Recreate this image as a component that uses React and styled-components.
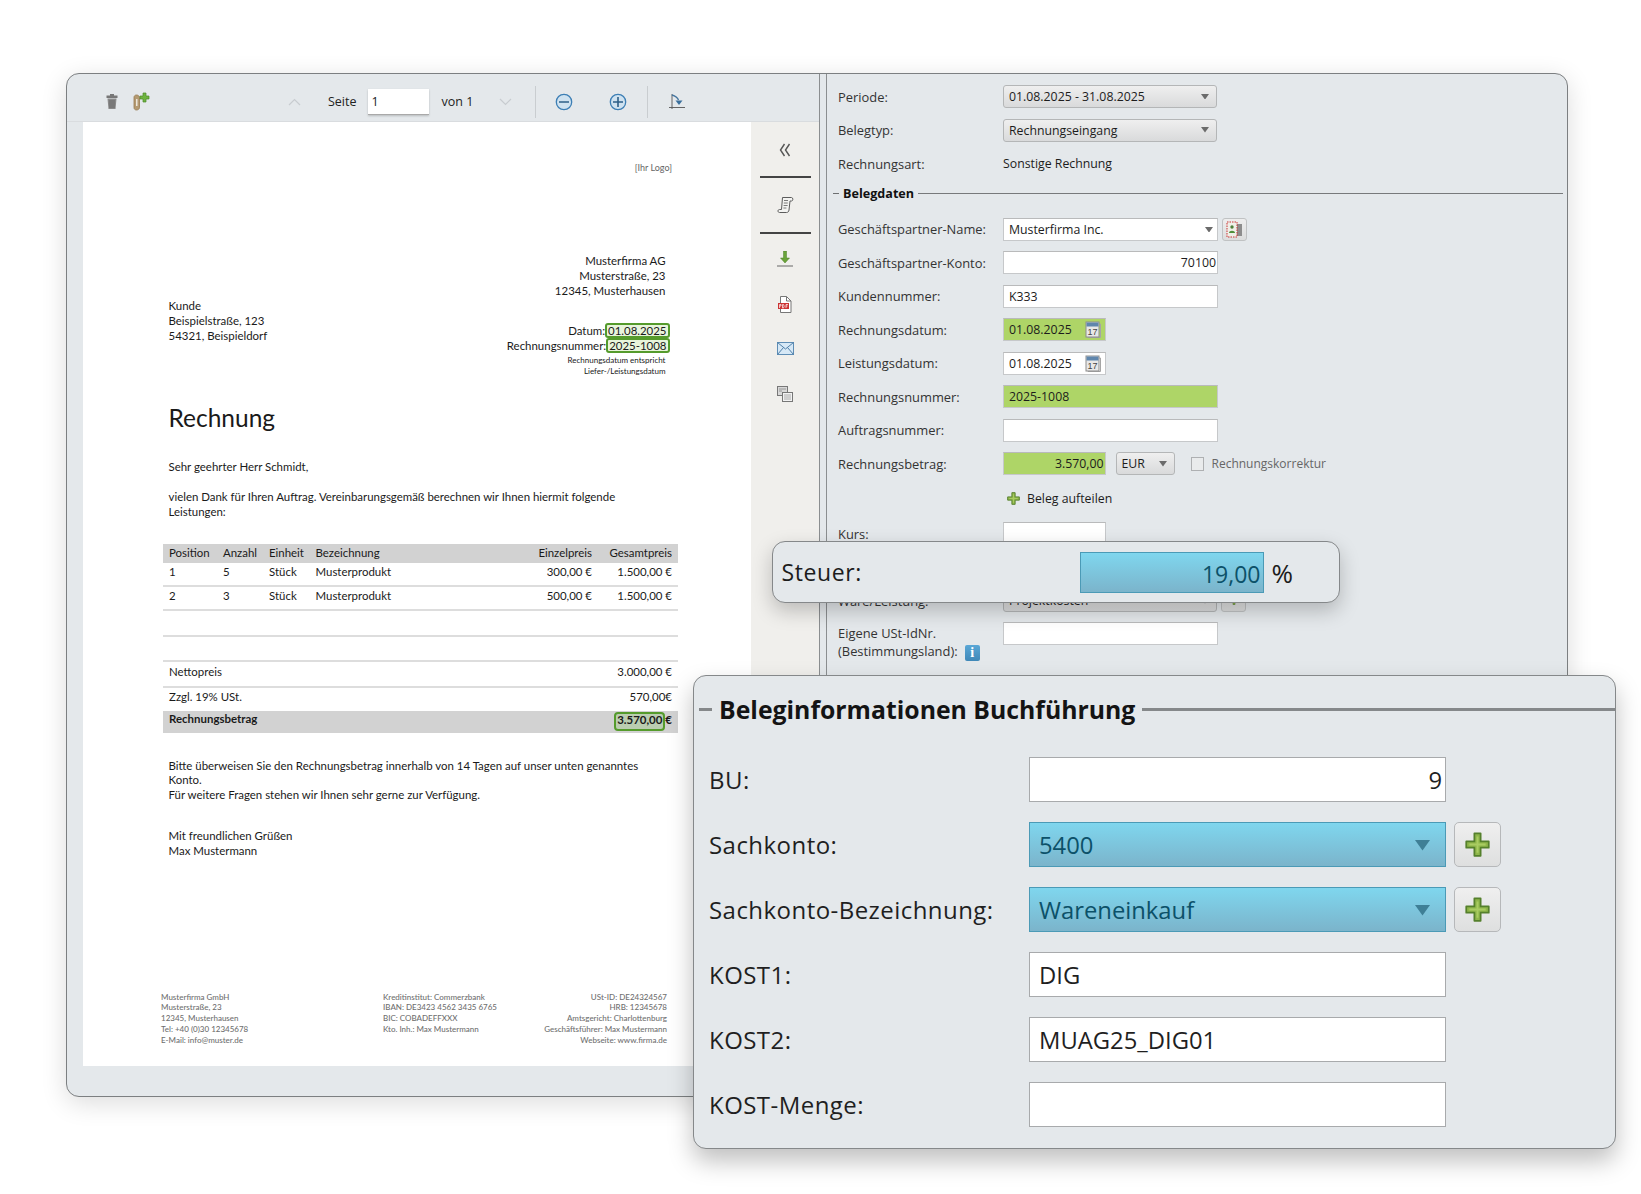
import React from "react";
import styled, { createGlobalStyle } from "styled-components";

const FORM_FONT = `"Open Sans", "Liberation Sans", sans-serif`;
const DOC_FONT = `Lato, "Open Sans", sans-serif`;

const GlobalStyle = createGlobalStyle`
  html, body {
    margin: 0;
    padding: 0;
    background: #fff;
  }
  * {
    box-sizing: border-box;
  }
`;

const Stage = styled.div`
  position: relative;
  width: 1641px;
  height: 1194px;
  padding: 73px 0 0 66px;
  overflow: hidden;
  font-family: ${FORM_FONT};
`;

const Window = styled.div`
  display: flex;
  width: 1502px;
  height: 1024px;
  background: #e4e8eb;
  border: 1px solid #7c7f81;
  border-radius: 13px;
  box-shadow: 0 6px 26px rgba(0, 0, 0, 0.14);
  overflow: hidden;
`;

const ViewerPane = styled.div`
  display: flex;
  flex-direction: column;
  width: 753px;
  flex: none;
  border-right: 1px solid #8b8e90;
`;

const Toolbar = styled.div`
  display: flex;
  align-items: center;
  height: 48px;
  flex: none;
  padding: 8px 0 0 36px;
  border-bottom: 1px solid #d9dcdf;
  color: #222;
  font-size: 12.5px;
`;

const ToolIcon = styled.span`
  display: inline-flex;
  width: ${(p) => p.$w || 18}px;
  justify-content: center;
  margin-left: ${(p) => p.$ml || 0}px;
`;

const ToolLabel = styled.span`
  margin-left: ${(p) => p.$ml || 0}px;
`;

const PageInput = styled.div`
  width: 61px;
  height: 26px;
  margin-left: 11px;
  padding-left: 4px;
  line-height: 26px;
  background: #fff;
  border-bottom: 1px solid #a9a9a9;
  box-shadow: 0 1px 2px rgba(0, 0, 0, 0.2);
`;

const ToolSeparator = styled.span`
  width: 1px;
  height: 32px;
  background: #c9cdd0;
  margin-left: ${(p) => p.$ml || 0}px;
`;

const ViewerBody = styled.div`
  display: flex;
  flex: 1;
  padding: 0 0 30px 16px;
`;

const Page = styled.div`
  width: 668px;
  background: #fff;
  color: #1a1a1a;
  font-family: ${DOC_FONT};
  font-size: 11.45px;
  line-height: 14.8px;
  padding: 39px 7px 0 85.5px;
`;

const LogoNote = styled.div`
  text-align: right;
  font-size: 9px;
  line-height: 14px;
  color: #666;
  padding-right: 72px;
`;

const HeadGrid = styled.div`
  display: grid;
  grid-template-columns: 1fr auto;
  margin-top: 79px;
  padding-right: 78.5px;
`;

const Recipient = styled.div`
  margin-top: 45px;
`;

const Sender = styled.div`
  text-align: right;
`;

const DateBlock = styled.div`
  margin-top: 26px;
`;

const Marked = styled.span`
  display: inline-block;
  margin: -2px -4px -2px 0;
  padding: 0 1px;
  line-height: 11px;
  background: rgba(150, 205, 90, 0.22);
  border: 2px solid #559b2c;
  border-radius: 3px;
`;

const SmallNote = styled.div`
  font-size: 8px;
  line-height: 10.6px;
  margin-top: 1px;
`;

const DocTitle = styled.div`
  font-size: 24.5px;
  line-height: 30px;
  margin-top: 27px;
`;

const DocPara = styled.p`
  margin: ${(p) => p.$mt || 0}px 0 0;
  max-width: 490px;
`;

const ItemTable = styled.div`
  margin: 24.5px 0 0 -5.5px;
  width: 515px;
`;

const ItemRow = styled.div`
  display: grid;
  grid-template-columns: 54px 46px 46.5px 1fr 80px 80px;
  align-items: center;
  height: ${(p) => (p.$head ? 19 : 24)}px;
  padding: 0 6px ${(p) => (p.$head ? 0 : 3)}px;
  background: ${(p) => (p.$head ? "#d2d2d2" : "transparent")};
  border-bottom: ${(p) => (p.$head ? "none" : "2.5px solid #dddddd")};
`;

const Right = styled.span`
  text-align: right;
`;

const Spacer = styled.div`
  height: ${(p) => p.$h}px;
  border-bottom: 2.5px solid #dddddd;
`;

const SumRow = styled.div`
  display: flex;
  justify-content: space-between;
  align-items: center;
  height: ${(p) => p.$h}px;
  padding: 0 6px 3px;
  border-bottom: ${(p) => (p.$line ? "2.5px solid #dddddd" : "none")};
`;

const TotalRow = styled.div`
  display: flex;
  justify-content: space-between;
  align-items: flex-start;
  height: 21.5px;
  padding: 1px 6px 0;
  font-weight: 700;
  background: #d2d2d2;
`;

const TotalBox = styled.span`
  display: inline-block;
  height: 19px;
  padding: 0 1px;
  line-height: 12px;
  background: rgba(120, 190, 80, 0.25);
  border: 2px solid #559b2c;
  border-radius: 4px;
`;

const Footer = styled.div`
  display: grid;
  grid-template-columns: 222px 1fr auto;
  margin: 133px 0 0 -7.5px;
  padding-right: 77px;
  font-size: 8px;
  line-height: 10.9px;
  color: #6f6f6f;
  font-weight: 500;
`;

const FooterRight = styled.div`
  text-align: right;
`;

const SideBar = styled.div`
  display: flex;
  flex-direction: column;
  align-items: center;
  width: 68px;
  background: #f0efec;
  padding-top: 18px;
`;

const SideSlot = styled.span`
  display: flex;
  height: 20px;
  align-items: center;
  justify-content: center;
  margin-bottom: ${(p) => p.$mb || 0}px;
`;

const SideRule = styled.div`
  width: 51px;
  height: 2px;
  background: #444;
  margin-bottom: ${(p) => p.$mb || 0}px;
`;

const FormPane = styled.div`
  flex: 1;
  border-left: 1px solid #8b8e90;
  margin-left: 6px;
  padding: 11px 4px 0 11px;
  color: #1c1c1c;
  font-size: 12.3px;
`;

const FormLabel = styled.span`
  color: #333;
  font-size: 12.9px;
`;

const FormRow = styled.div`
  display: grid;
  grid-template-columns: 165px auto;
  grid-template-rows: 23px;
  align-items: center;
  justify-items: start;
  margin-bottom: ${(p) => (p.$mb === undefined ? 10.5 : p.$mb)}px;
`;

const FieldLine = styled.div`
  display: flex;
  align-items: center;
`;

const Field = styled.div`
  display: flex;
  align-items: center;
  justify-content: ${(p) => (p.$right ? "flex-end" : "space-between")};
  width: ${(p) => p.$w || 215}px;
  height: 23px;
  padding: 0 ${(p) => (p.$right ? 1 : 4)}px 0 5px;
  background: ${(p) => (p.$green ? "#aed567" : "#fff")};
  border: 1px solid #c6c8ca;
  border-top-color: #b9babb;
`;

const Select = styled.div`
  display: flex;
  align-items: center;
  justify-content: space-between;
  width: ${(p) => p.$w || 214}px;
  height: 23px;
  margin-left: ${(p) => p.$ml || 0}px;
  padding: 0 7px 0 5px;
  background: linear-gradient(#efefef, #d9dadb);
  border: 1px solid #b4b6b7;
  border-radius: 3px;
`;

const SquareButton = styled.div`
  display: flex;
  align-items: center;
  justify-content: center;
  width: 25px;
  height: 23px;
  margin-left: 4px;
  background: linear-gradient(#eeeeee, #dcdddd);
  border: 1px solid #c0c2c3;
  border-radius: 3px;
`;

const CheckBox = styled.span`
  width: 13px;
  height: 14px;
  margin-left: 16px;
  background: #e9ebec;
  border: 1px solid #aeb0b2;
`;

const MutedLabel = styled.span`
  margin-left: 8px;
  font-size: 12px;
  color: #666;
`;

const AddLink = styled.div`
  display: flex;
  align-items: center;
  gap: 7px;
  margin: 2px 0 0 4px;
`;

const LegendRow = styled.div`
  display: flex;
  align-items: center;
  gap: 4px;
  height: 20px;
  margin: 0 0 14.3px -5px;
  color: #111;
  font-size: 12.6px;
  font-weight: 700;
`;

const LegendDash = styled.span`
  width: 6px;
  height: 1px;
  background: #6d6f71;
`;

const LegendLine = styled.span`
  flex: 1;
  height: 1.5px;
  background: #77797b;
`;

const InfoBadge = styled.span`
  display: inline-block;
  width: 15px;
  height: 16px;
  margin-left: 7px;
  line-height: 16px;
  text-align: center;
  vertical-align: middle;
  color: #fff;
  font-weight: 700;
  font-family: "Liberation Serif", serif;
  font-size: 14px;
  background: linear-gradient(#5aa7d6, #3f88b8);
  border-radius: 2px;
`;

const TwoLine = styled(FormLabel)`
  display: block;
  align-self: start;
  line-height: 17.5px;
  margin-top: 3px;
`;

const SteuerPopup = styled.div`
  position: absolute;
  left: 772px;
  top: 541px;
  width: 568px;
  height: 62px;
  display: flex;
  align-items: center;
  padding-left: 8.5px;
  font-size: 23px;
  color: #1c1c1c;
  background: #e4e8eb;
  border: 1.5px solid #85888a;
  border-radius: 13px;
  box-shadow: 0 8px 20px rgba(0, 0, 0, 0.22);
`;

const SteuerLabel = styled.span`
  width: 298px;
  flex: none;
  letter-spacing: 0.6px;
`;

const PercentSign = styled.span`
  margin-left: 8px;
  font-size: 26px;
  padding-top: 2px;
`;

const BlueField = styled.div`
  display: flex;
  align-items: center;
  width: 184px;
  height: 41px;
  justify-content: flex-end;
  padding: 3px 2px 0 0;
  color: #0c5169;
  background: linear-gradient(#7fd6ee, #7bb4cb);
  border: 1px solid #4b9ab6;
`;

const BookingPanel = styled.div`
  position: absolute;
  left: 693px;
  top: 675px;
  width: 923px;
  height: 474px;
  padding: 18px 0 0 15px;
  color: #1f1f1f;
  font-size: 23.8px;
  background: #e4e8eb;
  border: 1.5px solid #85888a;
  border-radius: 13px;
  box-shadow: 0 12px 24px rgba(0, 0, 0, 0.25);
`;

const BookingTitle = styled.div`
  display: flex;
  align-items: center;
  gap: 7px;
  height: 30px;
  margin: 0 0 33px -10px;
  color: #141414;
  font-size: 24.8px;
  font-weight: 700;
`;

const BookingDash = styled.span`
  width: 13px;
  height: 3px;
  background: #85888a;
`;

const BookingLine = styled.span`
  flex: 1;
  height: 3px;
  background: #85888a;
`;

const BookingRow = styled.div`
  display: flex;
  align-items: center;
  height: 44.5px;
  margin-bottom: 20.5px;
`;

const BookingLabel = styled.span`
  width: 320px;
  flex: none;
  font-size: 24px;
  letter-spacing: 0.45px;
`;

const BookingInput = styled.div`
  display: flex;
  align-items: center;
  justify-content: ${(p) => (p.$right ? "flex-end" : "flex-start")};
  width: 417px;
  height: 44.5px;
  padding: 2px ${(p) => (p.$right ? 3 : 9)}px 0;
  background: #fff;
  border: 1.5px solid #a8aaac;
`;

const BlueSelect = styled(BlueField)`
  justify-content: space-between;
  width: 417px;
  height: 44.5px;
  padding: 2px 15px 0 9px;
`;

const PlusButton = styled.div`
  display: flex;
  align-items: center;
  justify-content: center;
  width: 47px;
  height: 44.5px;
  margin-left: 8px;
  background: linear-gradient(#efefef, #dedfdf);
  border: 1.5px solid #b6b8ba;
  border-radius: 5px;
`;

const Caret = ({ color = "#6b6b6b", size = 8 }) => (
  <svg width={size} height={size * 0.7} viewBox="0 0 10 7">
    <path d="M0 0h10L5 7z" fill={color} />
  </svg>
);

const Chevron = ({ up }) => (
  <svg width="13" height="8" viewBox="0 0 13 8" fill="none" stroke="#c8ccd0" strokeWidth="1.2">
    <path d={up ? "M1 7l5.5-5.5L12 7" : "M1 1l5.5 5.5L12 1"} />
  </svg>
);

const TrashIcon = () => (
  <svg width="14" height="17" viewBox="0 0 14 17">
    <path d="M5 1h4v1.500h3.500V5h-11V2.500H5z" fill="#777" />
    <path d="M2.500 5.500h9L10.500 16h-7z" fill="#8a8a8a" />
    <path d="M5 7v8M7 7v8M9 7v8" stroke="#5f5f5f" strokeWidth="0.8" />
  </svg>
);

const AttachPlusIcon = () => (
  <svg width="17" height="19" viewBox="0 0 17 19">
    <path d="M1 5.500C1 4 2 3 3.500 3S6.500 4 6.500 5.500V15.500C6.500 17 5 18 3.500 18S1 17 1 15.500z" fill="#b49a72" stroke="#97794f" strokeWidth="0.8" />
    <path d="M3 7h1.500v7H3z" fill="#ece6da" />
    <path d="M10 1h3v3h3v3h-3v3h-3V7H7V4h3z" fill="#6db33f" stroke="#4b8a2a" strokeWidth="0.7" />
  </svg>
);

const CircleIcon = ({ plus }) => (
  <svg width="18" height="18" viewBox="0 0 18 18" fill="none">
    <circle cx="9" cy="9" r="7.700" stroke="#3d7fb5" strokeWidth="1.300" fill="#cfe2f0" />
    <path d={plus ? "M4 9h10M9 4v10" : "M4 9h10"} stroke="#2c5f88" strokeWidth="1.600" />
  </svg>
);

const RotateIcon = () => (
  <svg width="17" height="18" viewBox="0 0 17 18" fill="none">
    <path d="M3 1v15M0 14.500h16" stroke="#555" strokeWidth="0.9" />
    <path d="M3 2c3.500 1 5.500 2.500 6.500 5" stroke="#44759f" strokeWidth="1.400" />
    <path d="M6.500 7.500h7L10 12z" fill="#3a6f9c" />
  </svg>
);

const ChevronsLeft = () => (
  <svg width="12" height="14" viewBox="0 0 12 14" fill="none" stroke="#555" strokeWidth="1.400">
    <path d="M5.500 1L1.500 7l4 6M10.500 1l-4 6 4 6" />
  </svg>
);

const ScrollIcon = () => (
  <svg width="17" height="17" viewBox="0 0 17 17" fill="#f3f3f1" stroke="#5c5c5c" strokeWidth="1">
    <path d="M5.500 1.500h9c1.800 0 1.800 3.500 0 3.500H13L12 14c-.2 1.500-1 2.500-2.500 2.500H2.500c-2 0-2-3 0-3H4.500z" />
    <path d="M7 4.500h4M6.800 7h4M6.600 9.500h4M6.400 12h3" strokeWidth="0.800" />
  </svg>
);

const DownloadIcon = () => (
  <svg width="16" height="16" viewBox="0 0 16 16">
    <path d="M6.500 0h3v7h3L8 12 3.500 7h3z" fill="#6aa33a" stroke="#4a7f27" strokeWidth="0.500" />
    <path d="M0 15h16" stroke="#666" strokeWidth="1" />
  </svg>
);

const PdfIcon = () => (
  <svg width="15" height="17" viewBox="0 0 15 17">
    <path d="M2.500.5h6l4.500 4.500v11.500h-10.500z" fill="#fff" stroke="#777" />
    <path d="M8.500.5v4.500h4.500" fill="none" stroke="#777" />
    <rect x="0" y="7" width="11" height="6" fill="#cc3333" />
    <path d="M1.500 12V8.500h1.500v1.500h-1.500M4.500 12V8.500h1l.7 1.700-.7 1.800zM8 12V8.500h2M8 10h1.500" fill="none" stroke="#fff" strokeWidth="0.700" />
  </svg>
);

const MailIcon = () => (
  <svg width="17" height="13" viewBox="0 0 17 13">
    <rect x="0.500" y="0.500" width="16" height="12" fill="#d6e8f6" stroke="#5e8db5" />
    <path d="M.5.500L8.500 7l8-6.500M.5 12.500L6.500 5.500M16.500 12.500L10.500 5.500" fill="none" stroke="#4f7fa8" />
  </svg>
);

const CopyIcon = () => (
  <svg width="16" height="16" viewBox="0 0 16 16">
    <rect x="0.500" y="0.500" width="10" height="9" fill="#d8d8d8" stroke="#777" />
    <rect x="5.500" y="6.500" width="10" height="9" fill="#f2f2f2" stroke="#777" />
    <path d="M7 9h7M7 11h7M7 13h7" stroke="#999" strokeWidth="0.800" />
    <path d="M2 3h7M2 5h3" stroke="#888" strokeWidth="0.800" />
  </svg>
);

const CalendarIcon = () => (
  <svg width="16" height="17" viewBox="0 0 16 17">
    <path d="M14 3h1.500v13.500H3V15" fill="none" stroke="#a5a5a5" />
    <rect x="1" y="1" width="13" height="15" fill="#e8e8e8" stroke="#8d8d8d" />
    <rect x="1.500" y="1.500" width="12" height="4" fill="#5f86ad" />
    <text x="7.500" y="14" fontSize="9" textAnchor="middle" fill="#444" fontFamily="Liberation Sans, sans-serif">17</text>
  </svg>
);

const PartnerIcon = () => (
  <svg width="17" height="17" viewBox="0 0 17 17">
    <rect x="9" y="3" width="7" height="12" fill="#8d8d8d" />
    <rect x="1" y="1" width="10" height="15" fill="#efefe8" stroke="#c33" strokeDasharray="1.500 1" />
    <circle cx="6" cy="6" r="1.700" fill="#4f7f3a" />
    <path d="M3 12c0-3 6-3 6 0z" fill="#4f8f3a" />
  </svg>
);

const PlusIcon = ({ size = 13 }) => (
  <svg width={size} height={size} viewBox="0 0 20 20">
    <path d="M7.500 1h5v6.500H19v5h-6.500V19h-5v-6.500H1v-5h6.500z" fill="#8fb64a" stroke="#55802c" strokeWidth="1.400" strokeLinejoin="round" />
    <path d="M10 3.500v13M3.500 10h13" stroke="#a9cc62" strokeWidth="1.500" />
  </svg>
);

function InvoicePage() {
  return (
    <Page>
      <LogoNote>[Ihr Logo]</LogoNote>
      <HeadGrid>
        <Recipient>
          Kunde
          <br />
          Beispielstraße, 123
          <br />
          54321, Beispieldorf
        </Recipient>
        <Sender>
          Musterfirma AG
          <br />
          Musterstraße, 23
          <br />
          12345, Musterhausen
          <DateBlock>
            Datum:<Marked>01.08.2025</Marked>
            <br />
            Rechnungsnummer:<Marked>2025-1008</Marked>
            <SmallNote>
              Rechnungsdatum entspricht
              <br />
              Liefer-/Leistungsdatum
            </SmallNote>
          </DateBlock>
        </Sender>
      </HeadGrid>
      <DocTitle>Rechnung</DocTitle>
      <DocPara $mt={27}>Sehr geehrter Herr Schmidt,</DocPara>
      <DocPara $mt={15}>
        vielen Dank für Ihren Auftrag. Vereinbarungsgemäß berechnen wir Ihnen hiermit folgende Leistungen:
      </DocPara>
      <ItemTable>
        <ItemRow $head>
          <span>Position</span>
          <span>Anzahl</span>
          <span>Einheit</span>
          <span>Bezeichnung</span>
          <Right>Einzelpreis</Right>
          <Right>Gesamtpreis</Right>
        </ItemRow>
        <ItemRow>
          <span>1</span>
          <span>5</span>
          <span>Stück</span>
          <span>Musterprodukt</span>
          <Right>300,00 €</Right>
          <Right>1.500,00 €</Right>
        </ItemRow>
        <ItemRow>
          <span>2</span>
          <span>3</span>
          <span>Stück</span>
          <span>Musterprodukt</span>
          <Right>500,00 €</Right>
          <Right>1.500,00 €</Right>
        </ItemRow>
        <Spacer $h={26} />
        <Spacer $h={25} />
        <SumRow $h={25.5} $line>
          <span>Nettopreis</span>
          <span>3.000,00 €</span>
        </SumRow>
        <SumRow $h={23.5}>
          <span>Zzgl. 19% USt.</span>
          <span>570,00€</span>
        </SumRow>
        <TotalRow>
          <span>Rechnungsbetrag</span>
          <span>
            <TotalBox>3.570,00</TotalBox>€
          </span>
        </TotalRow>
      </ItemTable>
      <DocPara $mt={26}>
        Bitte überweisen Sie den Rechnungsbetrag innerhalb von 14 Tagen auf unser unten genanntes Konto.
        <br />
        Für weitere Fragen stehen wir Ihnen sehr gerne zur Verfügung.
      </DocPara>
      <DocPara $mt={26}>
        Mit freundlichen Grüßen
        <br />
        Max Mustermann
      </DocPara>
      <Footer>
        <div>
          Musterfirma GmbH
          <br />
          Musterstraße, 23
          <br />
          12345, Musterhausen
          <br />
          Tel: +40 (0)30 12345678
          <br />
          E-Mail: info@muster.de
        </div>
        <div>
          Kreditinstitut: Commerzbank
          <br />
          IBAN: DE3423 4562 3435 6765
          <br />
          BIC: COBADEFFXXX
          <br />
          Kto. Inh.: Max Mustermann
        </div>
        <FooterRight>
          USt-ID: DE24324567
          <br />
          HRB: 12345678
          <br />
          Amtsgericht: Charlottenburg
          <br />
          Geschäftsführer: Max Mustermann
          <br />
          Webseite: www.firma.de
        </FooterRight>
      </Footer>
    </Page>
  );
}

function Sidebar() {
  return (
    <SideBar>
      <SideSlot $mb={16}>
        <ChevronsLeft />
      </SideSlot>
      <SideRule $mb={16} />
      <SideSlot $mb={18}>
        <ScrollIcon />
      </SideSlot>
      <SideRule $mb={15} />
      <SideSlot $mb={25}>
        <DownloadIcon />
      </SideSlot>
      <SideSlot $mb={24}>
        <PdfIcon />
      </SideSlot>
      <SideSlot $mb={26}>
        <MailIcon />
      </SideSlot>
      <SideSlot>
        <CopyIcon />
      </SideSlot>
    </SideBar>
  );
}

function InvoiceForm() {
  return (
    <FormPane>
      <FormRow>
        <FormLabel>Periode:</FormLabel>
        <Select>
          01.08.2025 - 31.08.2025
          <Caret />
        </Select>
      </FormRow>
      <FormRow>
        <FormLabel>Belegtyp:</FormLabel>
        <Select>
          Rechnungseingang
          <Caret />
        </Select>
      </FormRow>
      <FormRow $mb={8.7}>
        <FormLabel>Rechnungsart:</FormLabel>
        <span>Sonstige Rechnung</span>
      </FormRow>
      <LegendRow>
        <LegendDash />
        Belegdaten
        <LegendLine />
      </LegendRow>
      <FormRow>
        <FormLabel>Geschäftspartner-Name:</FormLabel>
        <FieldLine>
          <Field>
            Musterfirma Inc.
            <Caret />
          </Field>
          <SquareButton>
            <PartnerIcon />
          </SquareButton>
        </FieldLine>
      </FormRow>
      <FormRow>
        <FormLabel>Geschäftspartner-Konto:</FormLabel>
        <Field $right>70100</Field>
      </FormRow>
      <FormRow>
        <FormLabel>Kundennummer:</FormLabel>
        <Field>K333</Field>
      </FormRow>
      <FormRow>
        <FormLabel>Rechnungsdatum:</FormLabel>
        <Field $w={102.5} $green>
          01.08.2025
          <CalendarIcon />
        </Field>
      </FormRow>
      <FormRow>
        <FormLabel>Leistungsdatum:</FormLabel>
        <Field $w={102.5}>
          01.08.2025
          <CalendarIcon />
        </Field>
      </FormRow>
      <FormRow>
        <FormLabel>Rechnungsnummer:</FormLabel>
        <Field $green>2025-1008</Field>
      </FormRow>
      <FormRow>
        <FormLabel>Auftragsnummer:</FormLabel>
        <Field />
      </FormRow>
      <FormRow>
        <FormLabel>Rechnungsbetrag:</FormLabel>
        <FieldLine>
          <Field $w={102.5} $green $right>
            3.570,00
          </Field>
          <Select $w={59} $ml={10}>
            EUR
            <Caret />
          </Select>
          <CheckBox />
          <MutedLabel>Rechnungskorrektur</MutedLabel>
        </FieldLine>
      </FormRow>
      <FormRow $mb={13.5}>
        <span />
        <AddLink>
          <PlusIcon />
          Beleg aufteilen
        </AddLink>
      </FormRow>
      <FormRow>
        <FormLabel>Kurs:</FormLabel>
        <Field $w={102.5} />
      </FormRow>
      <FormRow>
        <span />
        <Field $w={102.5} />
      </FormRow>
      <FormRow $mb={10}>
        <FormLabel>Ware/Leistung:</FormLabel>
        <FieldLine>
          <Select>
            Projektkosten
            <Caret />
          </Select>
          <SquareButton>
            <PlusIcon size={8} />
          </SquareButton>
        </FieldLine>
      </FormRow>
      <FormRow>
        <TwoLine>
          Eigene USt-IdNr.
          <br />
          (Bestimmungsland):<InfoBadge>i</InfoBadge>
        </TwoLine>
        <Field />
      </FormRow>
    </FormPane>
  );
}

function BookingInfo() {
  return (
    <BookingPanel>
      <BookingTitle>
        <BookingDash />
        Beleginformationen Buchführung
        <BookingLine />
      </BookingTitle>
      <BookingRow>
        <BookingLabel>BU:</BookingLabel>
        <BookingInput $right>9</BookingInput>
      </BookingRow>
      <BookingRow>
        <BookingLabel>Sachkonto:</BookingLabel>
        <BlueSelect>
          5400
          <Caret color="#3f7f96" size={15} />
        </BlueSelect>
        <PlusButton>
          <PlusIcon size={25} />
        </PlusButton>
      </BookingRow>
      <BookingRow>
        <BookingLabel>Sachkonto-Bezeichnung:</BookingLabel>
        <BlueSelect>
          Wareneinkauf
          <Caret color="#3f7f96" size={15} />
        </BlueSelect>
        <PlusButton>
          <PlusIcon size={25} />
        </PlusButton>
      </BookingRow>
      <BookingRow>
        <BookingLabel>KOST1:</BookingLabel>
        <BookingInput>DIG</BookingInput>
      </BookingRow>
      <BookingRow>
        <BookingLabel>KOST2:</BookingLabel>
        <BookingInput>MUAG25_DIG01</BookingInput>
      </BookingRow>
      <BookingRow>
        <BookingLabel>KOST-Menge:</BookingLabel>
        <BookingInput />
      </BookingRow>
    </BookingPanel>
  );
}

export default function App() {
  return (
    <Stage>
      <GlobalStyle />
      <Window>
        <ViewerPane>
          <Toolbar>
            <ToolIcon>
              <TrashIcon />
            </ToolIcon>
            <ToolIcon $ml={11}>
              <AttachPlusIcon />
            </ToolIcon>
            <ToolIcon $w={14} $ml={137}>
              <Chevron up />
            </ToolIcon>
            <ToolLabel $ml={27}>Seite</ToolLabel>
            <PageInput>1</PageInput>
            <ToolLabel $ml={13}>von 1</ToolLabel>
            <ToolIcon $w={14} $ml={25}>
              <Chevron />
            </ToolIcon>
            <ToolSeparator $ml={23} />
            <ToolIcon $ml={19}>
              <CircleIcon />
            </ToolIcon>
            <ToolIcon $ml={36}>
              <CircleIcon plus />
            </ToolIcon>
            <ToolSeparator $ml={20} />
            <ToolIcon $ml={20}>
              <RotateIcon />
            </ToolIcon>
          </Toolbar>
          <ViewerBody>
            <InvoicePage />
            <Sidebar />
          </ViewerBody>
        </ViewerPane>
        <InvoiceForm />
      </Window>
      <SteuerPopup>
        <SteuerLabel>Steuer:</SteuerLabel>
        <BlueField>19,00</BlueField>
        <PercentSign>%</PercentSign>
      </SteuerPopup>
      <BookingInfo />
    </Stage>
  );
}
